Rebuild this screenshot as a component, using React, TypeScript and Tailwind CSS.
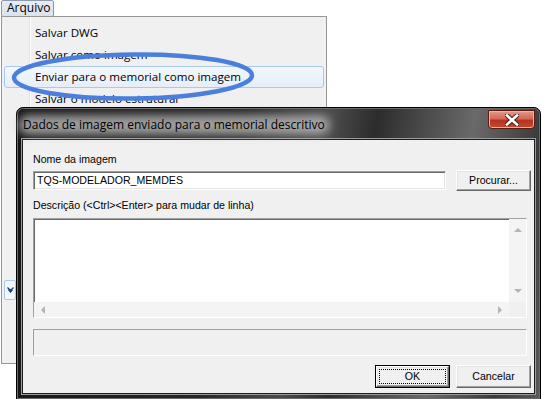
const ui = { fontFamily: '"Open Sans", "Liberation Sans", sans-serif' };
const dlg = { fontFamily: '"Liberation Sans", Arial, sans-serif' };

const raised =
  "border border-t-white border-l-white border-r-[#696969] border-b-[#696969] shadow-[inset_-1px_-1px_0_#a0a0a0,inset_1px_1px_0_#e3e3e3] bg-[#f0f0f0]";
const sunken =
  "border border-t-[#a0a0a0] border-l-[#a0a0a0] border-r-white border-b-white shadow-[inset_1px_1px_0_#696969,inset_-1px_-1px_0_#e3e3e3]";
const flat = "border border-t-[#a0a0a0] border-l-[#a0a0a0] border-r-white border-b-white";

function MenuItem({ label, active }: { label: string; active?: boolean }) {
  return (
    <div
      className={
        "h-[22px] mx-[2px] flex items-center pl-[30px] text-[11.6px] text-black rounded-[3px] " +
        (active
          ? "border border-[#a8caf0] bg-[linear-gradient(#f3f7fc,#e5eef9)]"
          : "border border-transparent")
      }
    >
      {label}
    </div>
  );
}

function CloseButton() {
  return (
    <div className="mt-[2px] w-[47px] h-[19px] rounded-b-[4px] border border-[#5a1c14] bg-[linear-gradient(#e39a8a_0%,#d26a58_45%,#b8321f_55%,#c54a36_100%)] shadow-[inset_0_0_0_1px_#f0b0a0] flex items-center justify-center">
      <svg width="14" height="12" viewBox="0 0 14 12">
        <path d="M2 1.5 L12 10.5 M12 1.5 L2 10.5" stroke="#3a2420" strokeWidth="4.5" strokeLinecap="square" />
        <path d="M2 1.5 L12 10.5 M12 1.5 L2 10.5" stroke="#ffffff" strokeWidth="2.6" strokeLinecap="square" />
      </svg>
    </div>
  );
}

function Tri({ dir }: { dir: "up" | "down" | "left" | "right" }) {
  const pts = {
    up: "1,5 5,1 9,5",
    down: "1,1 5,5 9,1",
    left: "5,1 1,5 5,9",
    right: "1,1 5,5 1,9",
  }[dir];
  const wide = dir === "up" || dir === "down";
  return (
    <svg width={wide ? 10 : 6} height={wide ? 6 : 10} viewBox={wide ? "0 0 10 6" : "0 0 6 10"}>
      <polygon points={pts} fill="#b4b4b4" />
    </svg>
  );
}

export default function App() {
  return (
    <div className="relative w-[542px] h-[399px] bg-white overflow-hidden" style={ui}>
      {/* menu bar */}
      <div className="h-[16px] flex">
        <div className="ml-[1px] w-[53px] h-[17px] border border-[#8b98ad] rounded-[2px] bg-[linear-gradient(#e8ecf2,#dbe2ec)] text-[12px] leading-[14px] pl-[5px] text-black">
          Arquivo
        </div>
      </div>

      {/* dropdown */}
      <div className="absolute left-[1px] top-[16px] w-[326px] h-[348px] border border-[#979797] bg-[#f0f0f0] pt-[5px]">
        <div className="absolute left-[27px] top-0 bottom-0 w-[2px] border-l border-[#e2e3e3] border-r-white border-r" />
        <div className="relative flex flex-col">
          <MenuItem label="Salvar DWG" />
          <MenuItem label="Salvar como imagem" />
          <MenuItem label="Enviar para o memorial como imagem" active />
          <MenuItem label="Salvar o modelo estrutural" />
          <div className="mt-[170px] ml-[2px] w-[12px] h-[20px] rounded-[2px] border border-[#a8caf0] bg-[#f3f7fc] flex items-center justify-center">
            <svg width="7" height="6" viewBox="0 0 7 6">
              <path d="M0.5 0.5 L3.5 3.5 L6.5 0.5 M1.5 2.5 L3.5 5 L5.5 2.5" stroke="#1e3f8a" strokeWidth="1.4" fill="none" />
            </svg>
          </div>
        </div>
      </div>

      {/* highlight ellipse */}
      <svg className="absolute left-0 top-0 pointer-events-none" width="542" height="120">
        <ellipse cx="133" cy="76.5" rx="119" ry="22" fill="none" stroke="#4b7fdb" strokeWidth="4.5" transform="rotate(-0.6 133 76.5)" />
      </svg>

      {/* dialog */}
      <div
        className="absolute left-[16px] top-[107px] w-[525px] h-[293px] rounded-t-[7px] border border-black bg-[linear-gradient(100deg,#141414_0%,#262626_40%,#4c4c4c_55%,#2c2c2c_63%,#6a6a6a_80%,#3a3a3a_92%,#5a5a5a_100%)] flex flex-col px-[5px] pb-[5px] shadow-[inset_0_0_0_1px_#6a6a6a]"
        style={dlg}
      >
        <div className="h-[31px] flex items-start justify-between">
          <div className="relative mt-[7px] ml-[1px] h-[20px] flex items-center">
            <div className="absolute -inset-x-[5px] inset-y-0 rounded-[10px] bg-[#bdbdbd] blur-[5px] opacity-80" />
            <span className="relative text-[12px] text-black" style={ui}>
              Dados de imagem enviado para o memorial descritivo
            </span>
          </div>
          <CloseButton />
        </div>

        <div className="flex-1 bg-[#f0f0f0] border border-[#1c1c1c] shadow-[0_0_0_1px_#9c9c9c] pl-[10px] pt-[13px] flex flex-col text-[10.6px] text-black">
          <div className="h-[13px] leading-[13px]">Nome da imagem</div>
          <div className="mt-[4px] flex items-start">
            <div className={"mt-[1px] w-[413px] h-[19px] bg-white pl-[3px] leading-[17px] " + sunken}>
              TQS-MODELADOR_MEMDES
            </div>
            <div className={"ml-[10px] w-[75px] h-[21px] flex items-center justify-center " + raised}>
              Procurar...
            </div>
          </div>

          <div className="mt-[8px] h-[13px] leading-[13px]">
            Descrição (&lt;Ctrl&gt;&lt;Enter&gt; para mudar de linha)
          </div>
          <div className={"mt-[6px] w-[494px] h-[100px] bg-white flex flex-col " + sunken}>
            <div className="flex-1 flex">
              <div className="flex-1" />
              <div className="w-[17px] bg-[#f4f4f4] flex flex-col items-center justify-between py-[8px]">
                <Tri dir="up" />
                <Tri dir="down" />
              </div>
            </div>
            <div className="h-[15px] flex">
              <div className="flex-1 bg-[#f4f4f4] flex items-center justify-between px-[6px]">
                <Tri dir="left" />
                <Tri dir="right" />
              </div>
              <div className="w-[17px] bg-[#f0f0f0]" />
            </div>
          </div>

          <div className={"mt-[11px] w-[494px] h-[27px] " + flat} />

          <div className="mt-[9px] flex">
            <div className="ml-[342px] w-[75px] h-[23px] border border-black">
              <div className={"w-full h-full flex items-center justify-center p-[2px] " + raised}>
                <div className="w-full h-full border border-dotted border-black flex items-center justify-center">
                  OK
                </div>
              </div>
            </div>
            <div className={"ml-[6px] w-[75px] h-[23px] flex items-center justify-center " + raised}>
              Cancelar
            </div>
          </div>
        </div>
      </div>
    </div>
  );
}
